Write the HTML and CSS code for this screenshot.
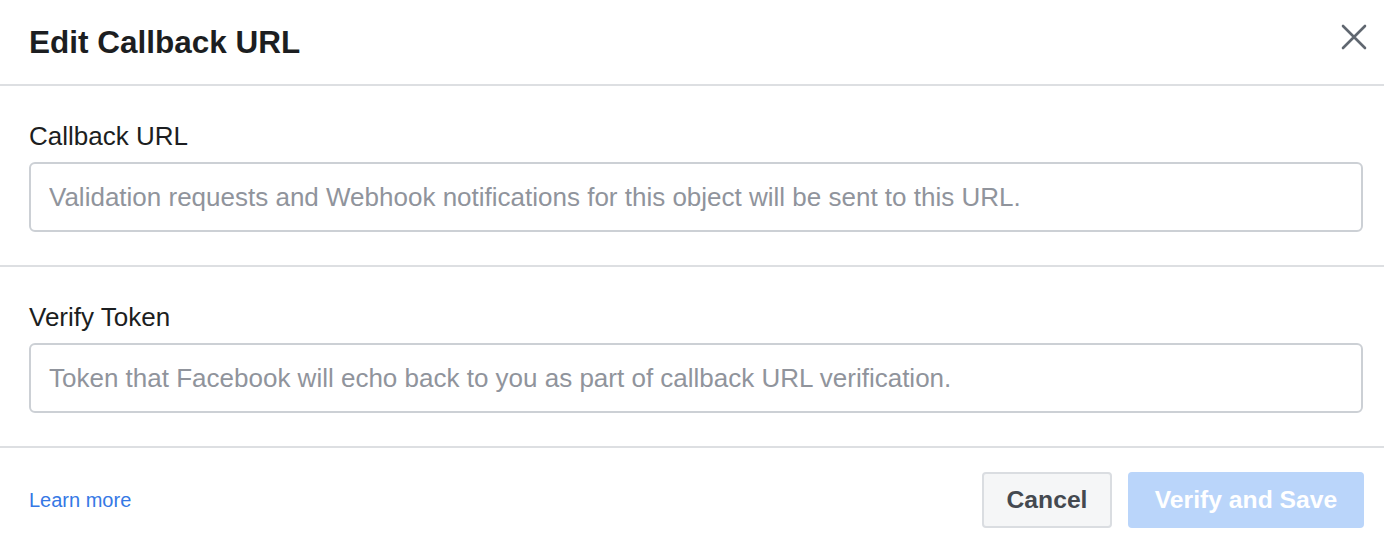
FILE: index.html
```html
<!DOCTYPE html>
<html lang="en">
<head>
<meta charset="utf-8">
<title>Edit Callback URL</title>
<link rel="stylesheet" href="styles.css">
</head>
<body>
<div class="dialog">
  <header class="dialog-header">
    <h1 class="dialog-title">Edit Callback URL</h1>
    <button class="close-btn" aria-label="Close">
      <svg width="26" height="26" viewBox="0 0 26 26" aria-hidden="true">
        <path d="M2 2 L24 24 M24 2 L2 24" stroke="#606770" stroke-width="2.6" stroke-linecap="round" fill="none"/>
      </svg>
    </button>
  </header>
  <section class="field-section">
    <label class="field-label" for="cb">Callback URL</label>
    <input class="field-input" id="cb" type="text" placeholder="Validation requests and Webhook notifications for this object will be sent to this URL.">
  </section>
  <section class="field-section">
    <label class="field-label" for="vt">Verify Token</label>
    <input class="field-input" id="vt" type="text" placeholder="Token that Facebook will echo back to you as part of callback URL verification.">
  </section>
  <footer class="dialog-footer">
    <a class="learn-link" href="#">Learn more</a>
    <div class="actions">
      <button class="btn btn-cancel">Cancel</button>
      <button class="btn btn-primary" disabled>Verify and Save</button>
    </div>
  </footer>
</div>
</body>
</html>
```

FILE: styles.css
```css
html, body {
  margin: 0;
  padding: 0;
  background: #ffffff;
}
body {
  font-family: "Liberation Sans", Arial, sans-serif;
  color: #1c1e21;
}
.dialog {
  width: 1384px;
  height: 542px;
  overflow: hidden;
  background: #fff;
}
.dialog-header {
  height: 84px;
  border-bottom: 2px solid #dddfe2;
  display: flex;
  justify-content: space-between;
  align-items: center;
  padding: 0 17px 0 29px;
}
.dialog-title {
  margin: 0;
  font-size: 31.5px;
  line-height: 36px;
  font-weight: 700;
  color: #1c1e21;
}
.close-btn {
  align-self: flex-start;
  margin-top: 24px;
  border: 0;
  background: none;
  padding: 0;
  width: 26px;
  height: 26px;
  cursor: pointer;
}
.close-btn svg { display: block; }
.field-section {
  border-bottom: 2px solid #dddfe2;
  padding: 34px 21px 33px 29px;
  display: flex;
  flex-direction: column;
  gap: 10px;
}
.field-label {
  font-size: 26px;
  line-height: 32px;
  color: #1c1e21;
}
.field-input {
  box-sizing: border-box;
  height: 70px;
  width: 100%;
  border: 2px solid #ccd0d5;
  border-radius: 6px;
  padding: 0 18px;
  font-family: "Liberation Sans", Arial, sans-serif;
  font-size: 26px;
  color: #1c1e21;
  background: #fff;
  outline: none;
}
.field-input::placeholder {
  color: #90949c;
}
.dialog-footer {
  display: flex;
  justify-content: space-between;
  align-items: center;
  padding: 24px 20px 14px 29px;
}
.learn-link {
  font-size: 20px;
  color: #3578e5;
  text-decoration: none;
}
.actions {
  display: flex;
  gap: 16px;
}
.btn {
  box-sizing: border-box;
  height: 56px;
  border-radius: 4px;
  font-family: "Liberation Sans", Arial, sans-serif;
  font-size: 24.7px;
  font-weight: 700;
  padding: 0;
}
.btn-cancel {
  width: 130px;
  background: #f5f6f7;
  border: 2px solid #dadde1;
  color: #444950;
}
.btn-primary {
  width: 236px;
  background: #bad5fa;
  border: 0;
  color: #ffffff;
}
```
